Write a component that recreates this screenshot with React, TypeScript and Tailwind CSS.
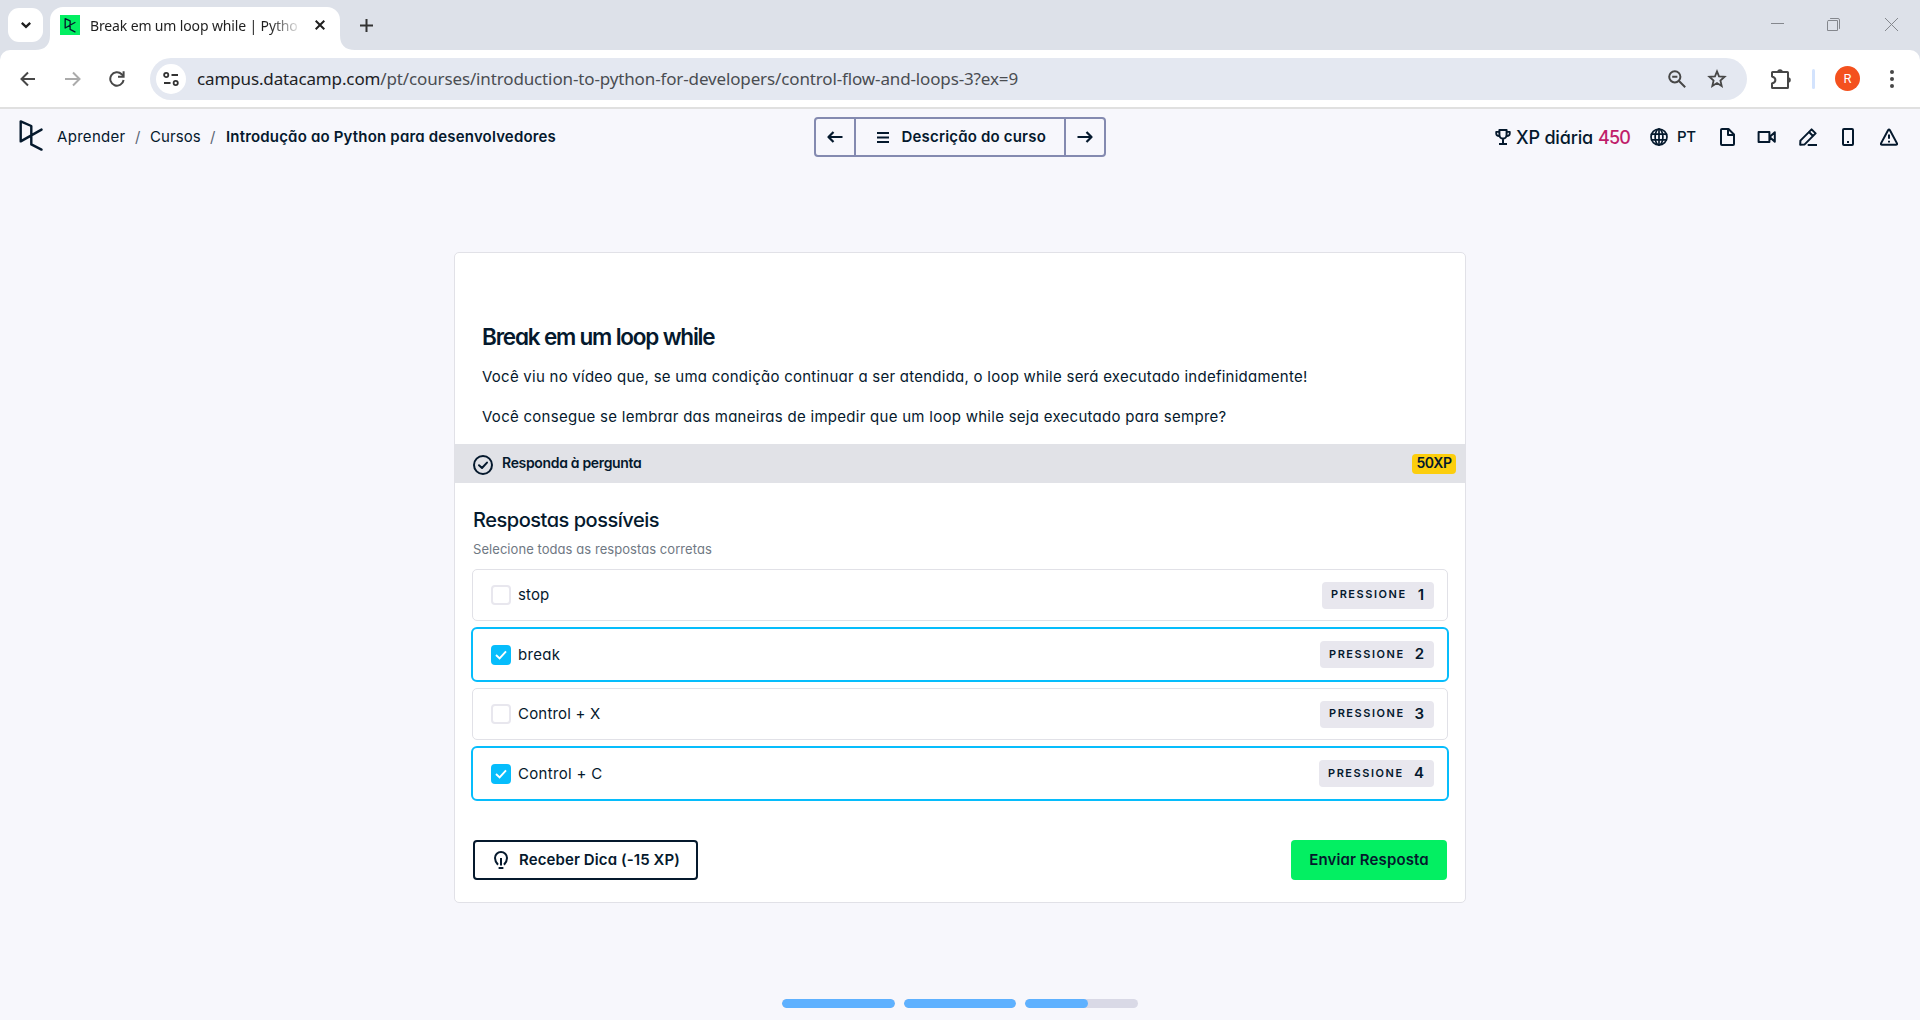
import type { ReactNode } from "react";

type IconProps = { children: ReactNode; className: string; viewBox?: string; width?: number };

function Icon({ children, className, viewBox = "0 0 18 18", width = 2 }: IconProps) {
  return (
    <svg
      viewBox={viewBox}
      className={`shrink-0 ${className}`}
      fill="none"
      stroke="currentColor"
      strokeWidth={width}
      strokeLinejoin="round"
      strokeLinecap="round"
    >
      {children}
    </svg>
  );
}

const LOGO = "M1.7 1.4 L12.3 6 V24.4 L22.5 29.6 M1.7 1.4 V21.4 L22.5 9.6";

function TabStrip() {
  return (
    <div className="flex h-[50px] bg-[#dde1e9]">
      <div className="mt-2 ml-2 flex h-[34px] w-[35px] items-center justify-center rounded-[11px] bg-white text-[#1f1f1f]">
        <Icon viewBox="0 0 12 8" className="h-2 w-3" width={2.3}>
          <path d="M1.8 1.8 L6 5.8 L10.2 1.8" strokeLinecap="butt" strokeLinejoin="miter" />
        </Icon>
      </div>
      <div className="relative mt-[7px] ml-[7px] flex h-[43px] w-[290px] items-center rounded-t-[13px] bg-white pb-[7px]">
        <svg viewBox="0 0 15 15" className="absolute bottom-0 -left-[15px] size-[15px]">
          <path d="M15 0 Q15 15 0 15 H15 Z" fill="#ffffff" />
        </svg>
        <svg viewBox="0 0 15 15" className="absolute -right-[15px] bottom-0 size-[15px]">
          <path d="M0 0 Q0 15 15 15 H0 Z" fill="#ffffff" />
        </svg>
        <div className="ml-[10px] flex size-5 items-center justify-center bg-[#03ef62] text-[#05192d]">
          <Icon viewBox="0 0 24 32" className="h-[15px] w-[12px]" width={2.8}>
            <path d={LOGO} />
          </Icon>
        </div>
        <div className="ml-[10px] w-[210px] overflow-hidden text-[14px] tracking-[-0.14px] whitespace-nowrap text-[#1f1f1f] [mask-image:linear-gradient(to_right,black_180px,transparent_212px)]">
          Break em um loop while | Pytho
        </div>
        <Icon viewBox="0 0 10 10" className="ml-[15px] size-[10px] text-[#1f1f1f]" width={2}>
          <path d="M.7 .7 L9.3 9.3 M9.3 .7 L.7 9.3" strokeLinecap="butt" />
        </Icon>
      </div>
      <Icon viewBox="0 0 13 13" className="mt-[19px] ml-[20px] size-[13px] text-[#333]" width={2}>
        <path d="M6.5 0 V13 M0 6.5 H13" strokeLinecap="butt" />
      </Icon>
      <div className="mt-[18px] mr-[22px] ml-auto flex text-[#84878d]">
        <Icon viewBox="0 0 13 13" className="size-[13px]" width={1}>
          <path d="M0 5.5 H13" />
        </Icon>
        <Icon viewBox="0 0 14 14" className="ml-[43px] size-[14px]" width={1}>
          <path d="M1.5 2.5 H10.5 V12.5 H.5 V3.5 Q.5 2.5 1.5 2.5" />
          <path d="M3.5 .5 H11 Q12.5 .5 12.5 2 V10.5" />
        </Icon>
        <Icon viewBox="0 0 13 13" className="ml-[44px] size-[13px]" width={1}>
          <path d="M0 0 L13 13 M13 0 L0 13" />
        </Icon>
      </div>
    </div>
  );
}

function Toolbar() {
  return (
    <div className="bg-[#dde1e9]">
      <div className="flex h-[57px] items-center rounded-t-[10px] bg-white text-[#474747]">
        <Icon viewBox="0 0 16 16" className="ml-5 size-4">
          <path d="M15 8 H2 M8 1.5 L1.5 8 L8 14.5" strokeLinecap="butt" strokeLinejoin="miter" />
        </Icon>
        <Icon viewBox="0 0 16 16" className="ml-[29px] size-4 text-[#ababab]">
          <path d="M0 8 H14 M8 1.5 L14.5 8 L8 14.5" strokeLinecap="butt" strokeLinejoin="miter" />
        </Icon>
        <Icon viewBox="0 0 16 16" className="ml-[28px] size-4">
          <path d="M14.6 9 A6.7 6.7 0 1 1 12.7 3.2 L14.5 5" strokeLinecap="butt" />
          <path d="M14.6 .3 V5.8 H9" strokeLinecap="butt" strokeLinejoin="miter" />
        </Icon>
        <div className="ml-[25px] flex h-[42px] w-[1597px] items-center rounded-full bg-[#e4e8f1]">
          <div className="ml-[6px] flex size-[30px] items-center justify-center rounded-full bg-white text-[#333]">
            <Icon viewBox="0 0 16 14" className="h-[14px] w-4" width={1.8}>
              <circle cx="3.2" cy="3" r="2.1" />
              <path d="M8.5 3 H15 M1 11 H7.5" strokeLinecap="butt" />
              <circle cx="12.7" cy="11" r="2.1" />
            </Icon>
          </div>
          <div className="mt-px ml-[11px] text-[17px] leading-[22px] tracking-[-0.135px] whitespace-nowrap text-[#4a4d52]">
            <span className="text-[#202124]">campus.datacamp.com</span>
            /pt/courses/introduction-to-python-for-developers/control-flow-and-loops-3?ex=9
          </div>
          <Icon className="ml-auto size-[18px]">
            <circle cx="6.8" cy="6.8" r="5.6" />
            <path d="M11 11 L17.2 17.2 M4.2 6.8 H9.4" strokeLinecap="butt" />
          </Icon>
          <Icon viewBox="0 0 20 20" className="mr-5 ml-[21px] size-[20px]" width={1.8}>
            <path
              d="M10 2.4 L12 7.4 L17.6 7.8 L13.4 11.5 L14.7 17 L10 14.1 L5.3 17 L6.6 11.5 L2.4 7.8 L8 7.4 Z"
              strokeLinejoin="miter"
            />
          </Icon>
        </div>
        <Icon viewBox="0 0 22 22" className="ml-[23px] size-[22px]">
          <path d="M2 4.6 Q2 4 2.6 4 H17.4 Q18 4 18 4.6 V19.4 Q18 20 17.4 20 H2.6 Q2 20 2 19.4 V15.5 Q5.4 14.5 5.4 12 Q5.4 9.5 2 8.5 Z" />
          <path d="M7.2 4 A2.8 2.8 0 0 1 12.8 4 Z M18 9.2 A2.8 2.8 0 0 1 18 14.8 Z" fill="currentColor" stroke="none" />
        </Icon>
        <div className="ml-[20px] h-5 w-[3px] rounded bg-[#d3e3fd]" />
        <div className="ml-5 flex size-[25px] items-center justify-center rounded-full bg-[#f4511e] font-['Roboto',sans-serif] text-[13px] text-white">
          R
        </div>
        <div className="ml-[30px] flex flex-col gap-[3px]">
          <span className="size-1 rounded-full bg-[#474747]" />
          <span className="size-1 rounded-full bg-[#474747]" />
          <span className="size-1 rounded-full bg-[#474747]" />
        </div>
      </div>
    </div>
  );
}

function Breadcrumbs() {
  return (
    <div className="flex w-[814px] items-center text-[15px] whitespace-nowrap">
      <Icon viewBox="0 0 24 32" className="ml-5 h-8 w-6 -translate-x-px -translate-y-px" width={2.4}>
        <path d={LOGO} />
      </Icon>
      <span className="ml-[13px] w-[69px] tracking-[0.3px]">Aprender</span>
      <span className="ml-[9px] w-[6px] text-[#5c6675]">/</span>
      <span className="ml-[9px] w-[51px] tracking-[0.06px]">Cursos</span>
      <span className="ml-[9px] w-[6px] text-[#5c6675]">/</span>
      <span className="ml-[10px] font-semibold tracking-[0.18px]">Introdução ao Python para desenvolvedores</span>
    </div>
  );
}

function CourseNav() {
  return (
    <div className="flex h-10 w-[292px] items-center rounded-[4px] border-2 border-[#848ab0]">
      <div className="flex w-[38px] justify-center">
        <Icon viewBox="0 0 16 12" className="h-3 w-4" width={2.2}>
          <path d="M15.5 6 H2 M6.5 1 L1.5 6 L6.5 11" strokeLinecap="butt" />
        </Icon>
      </div>
      <div className="flex h-full w-[212px] items-center border-x-2 border-[#848ab0] pl-[21px]">
        <Icon viewBox="0 0 12 11" className="h-[11px] w-3" width={2}>
          <path d="M0 1 H12 M0 5.5 H12 M0 10 H12" strokeLinecap="butt" />
        </Icon>
        <span className="ml-[12.5px] text-[15px] font-semibold tracking-[0.18px] whitespace-nowrap">Descrição do curso</span>
      </div>
      <div className="flex flex-1 justify-center">
        <Icon viewBox="0 0 16 12" className="h-3 w-4" width={2.2}>
          <path d="M.5 6 H14 M9.5 1 L14.5 6 L9.5 11" strokeLinecap="butt" />
        </Icon>
      </div>
    </div>
  );
}

function HeaderTools() {
  return (
    <div className="ml-auto flex items-center pr-[22px] whitespace-nowrap">
      <Icon viewBox="0 0 16 18" className="h-[18px] w-4">
        <path d="M4.4 2 H11.6 V7 A3.6 3.6 0 0 1 4.4 7 Z M8 10.8 V15.5 M4 16 H12" strokeLinecap="butt" />
        <path d="M4 3.8 H1.2 V5.5 Q1.2 8 4.4 8.2 M12 3.8 H14.8 V5.5 Q14.8 8 11.6 8.2" strokeWidth={1.8} />
      </Icon>
      <span className="ml-[5px] w-[77px] text-[18px] font-medium tracking-[-0.18px]">XP diária</span>
      <span className="ml-[5px] w-[32px] text-[18px] font-medium tracking-[-0.9px] text-[#c01e6b]">450</span>
      <Icon className="ml-[20px] size-[18px]" width={1.7}>
        <circle cx="9" cy="9" r="8" />
        <ellipse cx="9" cy="9" rx="3.9" ry="8" />
        <path d="M1.6 6.2 H16.4 M1.6 11.8 H16.4 M9 1 V17" />
      </Icon>
      <span className="ml-[9px] w-[20px] text-[15px] font-medium tracking-[-0.3px]">PT</span>
      <Icon viewBox="0 0 16 18" className="ml-[23px] h-[18px] w-4">
        <path d="M2 1 H8.5 L14 6.5 V16 Q14 17 13 17 H2 Q1 17 1 16 V2 Q1 1 2 1 Z M8 1.5 V7 H14" />
      </Icon>
      <Icon viewBox="0 0 19 14" className="ml-[21px] h-[14px] w-[19px]">
        <path d="M1.6 2 H12.4 V12 H1.6 Z M12.6 7 L17.8 2.2 V11.8 Z" />
      </Icon>
      <Icon className="ml-[23px] size-[18px]">
        <path d="M1.4 12.6 L12.6 1.4 L16.6 5.4 L5.4 16.6 L1.2 16.8 Z M10 4 L14 8 M9.5 17 H17.5" />
      </Icon>
      <Icon viewBox="0 0 12 18" className="ml-[25px] h-[18px] w-3">
        <rect x="1" y="1" width="10" height="16" rx="1" />
        <path d="M5 14 H7" strokeLinecap="butt" />
      </Icon>
      <Icon className="ml-[26px] size-[18px]">
        <path d="M8.2 2 Q9 .8 9.8 2 L17 15.4 Q17.4 16.8 16 16.8 H2 Q.6 16.8 1 15.4 Z M9 6.6 V10.8 M9 12.8 V14.6" strokeLinecap="butt" />
      </Icon>
    </div>
  );
}

type Option = { label: string; checked: boolean; digit: string; badge: string; tracking: string };

const OPTIONS: Option[] = [
  { label: "stop", checked: false, digit: "1", badge: "w-[112px]", tracking: "tracking-[0.1px]" },
  { label: "break", checked: true, digit: "2", badge: "w-[114px]", tracking: "tracking-[0.3px]" },
  { label: "Control + X", checked: false, digit: "3", badge: "w-[114px]", tracking: "tracking-[0.2px]" },
  { label: "Control + C", checked: true, digit: "4", badge: "w-[115px]", tracking: "tracking-[0.32px]" },
];

function OptionRow({ option }: { option: Option }) {
  return (
    <div
      className={
        option.checked
          ? "flex h-[55px] items-center rounded-[6px] border-2 border-[#06bdfc] pr-[13px] pl-[18px]"
          : "mx-px flex h-[52px] items-center rounded-[5px] border border-[#e1e1e7] pr-[13px] pl-[18px]"
      }
    >
      {option.checked ? (
        <div className="flex size-5 items-center justify-center rounded-[4px] bg-[#06bdfc] text-white">
          <Icon viewBox="0 0 12 10" className="h-[10px] w-3" width={1.9}>
            <path d="M1 5 L4.6 8.5 L11 1.4" strokeLinecap="butt" strokeLinejoin="miter" />
          </Icon>
        </div>
      ) : (
        <div className="size-5 rounded-[4px] border-2 border-[#e8e7ee]" />
      )}
      <span className={`ml-[7px] text-[15px] ${option.checked ? "pt-px" : ""} ${option.tracking}`}>{option.label}</span>
      <div
        className={`ml-auto flex h-[27px] items-center justify-between rounded-[4px] bg-[#e8e7ee] pr-[10px] pl-[9px] font-semibold ${option.badge}`}
      >
        <span className="pb-px text-[11px] tracking-[1.55px]">PRESSIONE</span>
        <span className="text-[15px]">{option.digit}</span>
      </div>
    </div>
  );
}

function ExerciseCard() {
  return (
    <main className="mx-auto mt-[87px] flex h-[651px] w-[1012px] flex-col rounded-[5px] border border-[#e1e1e7] bg-white">
      <div className="h-[191px] pt-[69px] pl-[27px] whitespace-nowrap">
        <h1 className="text-[22.5px] leading-[30px] font-semibold tracking-[-1.2px]">Break em um loop while</h1>
        <p className="mt-[15px] text-[15px] leading-5 tracking-[0.25px]">
          Você viu no vídeo que, se uma condição continuar a ser atendida, o loop while será executado indefinidamente!
        </p>
        <p className="mt-5 text-[15px] leading-5 tracking-[0.275px]">
          Você consegue se lembrar das maneiras de impedir que um loop while seja executado para sempre?
        </p>
      </div>
      <div className="flex h-[39px] items-center bg-[#e1e2e7] pr-[9px] pl-[18px]">
        <Icon viewBox="0 0 20 20" className="size-5 translate-y-px">
          <circle cx="10" cy="10" r="9" />
          <path d="M6 10.2 L9 13 L14 7.6" />
        </Icon>
        <span className="ml-[9px] pb-[2px] text-[14px] font-semibold tracking-[-0.33px]">Responda à pergunta</span>
        <span className="mt-px ml-auto flex h-5 w-11 items-center justify-center rounded-[4px] bg-[#fcce0d] pb-[3px] text-[14px] font-semibold tracking-[-0.4px]">
          50XP
        </span>
      </div>
      <div className="px-[16px] pt-[23px]">
        <h2 className="ml-[2px] text-[20px] leading-7 font-medium tracking-[-0.48px]">Respostas possíveis</h2>
        <p className="mt-[7px] ml-[2px] text-[13px] leading-4 tracking-[0.06px] text-[#6f7883]">
          Selecione todas as respostas corretas
        </p>
        <div className="mt-[12px] flex w-[978px] flex-col gap-[6px]">
          {OPTIONS.map((option) => (
            <OptionRow key={option.digit} option={option} />
          ))}
        </div>
        <div className="mt-[39px] ml-[2px] flex h-10 w-[974px] items-center justify-between text-[15px] font-semibold whitespace-nowrap">
          <button className="flex h-10 w-[225px] items-center rounded-[4px] border-2 border-[#05192d] pl-[19px]">
            <Icon viewBox="0 0 14 18" className="h-[18px] w-[14px]">
              <path d="M4 13.8 Q1 10.6 1 7 A6 6 0 0 1 13 7 Q13 10.6 10 13.8 M7 7 V14.5 M4.6 17 H9.4" strokeLinecap="butt" />
            </Icon>
            <span className="ml-[11px] tracking-[0.1px]">Receber Dica (-15 XP)</span>
          </button>
          <button className="h-10 w-[156px] rounded-[4px] bg-[#03ef62] tracking-[0.115px]">Enviar Resposta</button>
        </div>
      </div>
    </main>
  );
}

function Progress() {
  const segments = [100, 100, 56];
  return (
    <div className="mx-auto mt-[96px] flex w-[356px] gap-[9px]">
      {segments.map((value, index) => (
        <div key={index} className="h-[9px] flex-1 overflow-hidden rounded-full bg-[#d9d9e6]">
          <div className="h-full rounded-full bg-[#5eb1ff]" style={{ width: `${value}%` }} />
        </div>
      ))}
    </div>
  );
}

export default function App() {
  return (
    <div className="h-[1020px] w-[1920px] overflow-hidden bg-[#f7f7fc]">
      <div className="font-['Noto_Sans',sans-serif]">
        <TabStrip />
        <Toolbar />
      </div>
      <div className="h-[913px] border-t-2 border-[#e0e0e0] font-['Inter',sans-serif] text-[#05192d] [font-feature-settings:'cv11']">
        <header className="flex h-14 items-center">
          <Breadcrumbs />
          <CourseNav />
          <HeaderTools />
        </header>
        <ExerciseCard />
        <Progress />
      </div>
    </div>
  );
}
